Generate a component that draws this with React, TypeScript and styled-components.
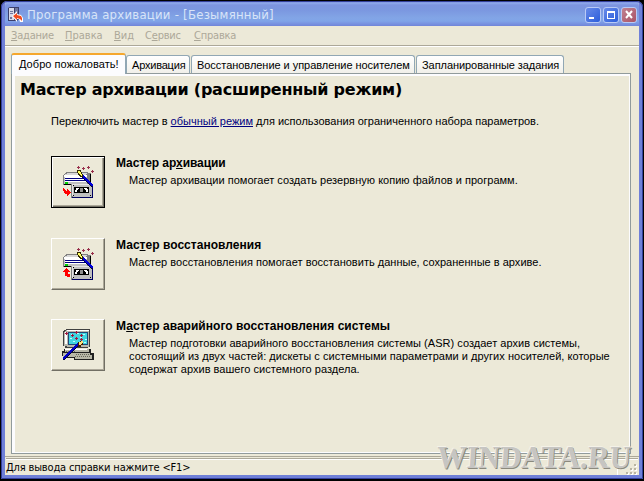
import React from "react";
import styled, { createGlobalStyle, css } from "styled-components";

const Global = createGlobalStyle`
  * { box-sizing: border-box; }
  body { margin: 0; background: #000; overflow: hidden; }
`;
const ui = `"DejaVu Sans Condensed", "DejaVu Sans", sans-serif`;
const sans = `"Liberation Sans", Arial, sans-serif`;

const Text = styled.span<{ $ls?: number }>`
  letter-spacing: ${(p) => p.$ls ?? 0}px;
  white-space: pre;
`;
const Frame = styled.div`
  position: relative;
  width: 644px;
  height: 481px;
  padding: 1px 1px 2px 1px;
  background: #000;
`;
const Window = styled.div`
  height: 478px;
  display: flex;
  flex-direction: column;
  border: solid #6f80d8;
  border-width: 0 4px 4px 4px;
  border-radius: 6px 6px 0 0;
  background: #ece9d8;
  overflow: hidden;
  outline: 1px solid #34409c;
  outline-offset: -1px;
`;
const TitleBar = styled.header`
  height: 25px;
  flex: none;
  margin: 0 -4px;
  padding: 2px 6px 0 6px;
  display: flex;
  align-items: center;
  gap: 4px;
  color: #d8e4f8;
  font: 13px/20px ${ui};
  background: linear-gradient(#6678ce 0, #8fa9ec 2px, #7d95e0 4px, #7b97e0 9px, #82a5e6 17px, #80a4e8 20px, #7891e0 23px, #7085d8 25px);
`;
const Caption = styled.div`flex: 1; padding-top: 1px;`;
const Controls = styled.div`display: flex; gap: 2px; margin-top: 1px;`;
const Control = styled.button<{ $close?: boolean }>`
  width: 16px;
  height: 16px;
  padding: 0;
  display: block;
  border: 1px solid #b9caf5;
  border-radius: 3px;
  background: ${(p) => (p.$close ? "linear-gradient(135deg,#c18291,#a95366)" : "linear-gradient(135deg,#688be9,#2b5ddb)")};
  svg { display: block; }
`;
const MenuBar = styled.nav`
  height: 20px;
  flex: none;
  display: flex;
  padding: 0 6px;
  color: #aca899;
  font: 11px/19px ${ui};
  border-bottom: 1px solid #aca899;
  box-shadow: 0 1px #fff;
`;
const MenuItem = styled.span<{ $w: number }>`width: ${(p) => p.$w}px;`;
const Tabs = styled.div`
  height: 27px;
  flex: none;
  display: flex;
  align-items: flex-end;
  padding-left: 6px;
`;
const Tab = styled.button<{ $w: number; $on?: boolean }>`
  position: relative;
  width: ${(p) => p.$w}px;
  height: 18px;
  padding: 0 0 0 5px;
  margin-right: 1px;
  text-align: left;
  border: 1px solid #91a7b4;
  border-bottom: 0;
  border-radius: 3px 3px 0 0;
  color: #000;
  background: linear-gradient(#fff, #f1f0ea);
  font: 11px/18px ${sans};
  ${(p) => p.$on && css`
    height: 21px;
    margin: 0 0 -1px;
    padding-left: 7px;
    z-index: 1;
    border-top: 2px solid #f5a72d;
    background: #fcfcfe;
    line-height: 16px;
    padding-bottom: 2px;
  `}
`;
const Panel = styled.main`
  width: 620px;
  height: 381px;
  flex: none;
  margin-left: 6px;
  border: 1px solid #919b9c;
`;
const Inner = styled.div`
  height: 379px;
  border: solid #fcfcfe;
  border-width: 2px 1px 1px 3px;
  background: #ece9d8;
  padding: 2px 0 0 5px;
`;
const Heading = styled.h1`
  margin: 0;
  height: 28px;
  font: bold 16px/24px "DejaVu Sans", sans-serif;
`;
const Intro = styled.p`
  margin: 0 0 0 31px;
  height: 50px;
  font: 11px/30px ${sans};
  a { color: #000080; text-decoration: underline; }
`;
const Row = styled.section`
  display: flex;
  height: 81.6px;
  margin-left: 31px;
  font: 11px/13px ${sans};
`;
const WizardButton = styled.button<{ $focus?: boolean }>`
  width: 54px;
  height: 52px;
  flex: none;
  padding: 0;
  display: grid;
  place-items: center;
  background: #ece9d8;
  border: 1px solid;
  border-color: ${(p) => (p.$focus ? "#000" : "#fff #716f64 #716f64 #fff")};
  box-shadow: ${(p) => (p.$focus ? "inset 1px 1px #fff, inset -1px -1px #716f64, inset -2px -2px #aca899" : "inset -1px -1px #aca899")};
`;
const Copy = styled.div`
  padding: 1px 0 0 11px;
  h2 { margin: 0 0 4px; font: bold 12px/13px ${sans}; }
  p { margin: 0 0 0 13px; }
  p > span { display: block; }
`;
const Status = styled.footer`
  flex: 1;
  margin-top: 2px;
  border-top: 1px solid #aca899;
  padding: 1px 1px 0;
  background: #ece9d8;
  font: 11px/18px ${ui};
`;
const StatusRow = styled.div`
  display: flex;
  align-items: flex-end;
  border-top: 1px solid #aca899;
  box-shadow: inset 0 1px #fff;
  > span { flex: 1; }
`;
const Divider = styled.i`
  width: 1px;
  height: 13px;
  margin-right: 8px;
  background: #fff;
`;
const Watermark = styled.div`
  position: absolute;
  left: 437px;
  top: 440px;
  font: bold 32px/34px "Liberation Serif", serif;
  transform: scaleX(0.935) skewX(-4deg);
  transform-origin: 0 50%;
  color: #c6c5c2;
  text-shadow: -1px -1px #f4f2e8, 1px 1px #8b897d;
  white-space: nowrap;
`;

const Stars = () => (
  <path fill="#98304c" d="M15 1h1v-1h1v1h1v1h-1v1h-1v-1h-1zM20 2h1v-1h1v1h1v1h-1v1h-1v-1h-1zM25 1h1v-1h1v1h1v1h-1v1h-1v-1h-1zM29 5h1v-1h1v1h1v1h-1v1h-1v-1h-1z" />
);
const TapeIcon = ({ restore = false }: { restore?: boolean }) => (
  <svg width="32" height="32" shapeRendering="crispEdges">
    <path fill="#808080" d="M4 6h22v1h3v10h-2v2H1V9h1V8h1V7h1z" />
    <path fill="#d8d8d8" d="M5 7h20v1h-1v1H3V8h2z" />
    <path fill="#fff" d="M2 9h23v2H2z" />
    <path fill="#c0c0c0" d="M2 11h23v7H2z" />
    <path fill="#fff" d="M3 11h21v5H3z" />
    <path fill="#000080" d="M3 12h20v1H3zM3 14h20v1H3z" />
    <path fill="#00d000" d="M3 16h3v2H3z" />
    <path fill="#000" d="M2 18h8v1H2zM28 8h1v9h-1z" />
    <path fill="#808080" d="M9 18h22v14H9z" />
    <path fill="#e4e4e4" d="M10 18h20v12H10z" />
    <path fill="#c0c0c0" d="M11 19h19v12H11z" />
    <path fill="#000060" d="M10 31h21v1H10zM30 20h1v12h-1z" />
    <path fill="#000" d="M12 21h15v6H12zM11 19h1v1h-1zM28 19h1v1h-1zM11 29h1v1h-1zM28 29h1v1h-1z" />
    <path fill="#fff" d="M14 22h3v1h-1v1h-1v2h-2v-2h1zM22 22h3v1h1v3h-2v-2h-1v-1h-1z" />
    <path fill="#909090" d="M18 22h3v4h-3z" />
    <path fill="#f00" d={restore ? "M4 20h1v1h1v1h1v1h1v1H6v2h2v3H5v-1H3v-4H1v-1h1v-1h1v-1h1z" : "M1 22h1v1h1v1h1v1h1v-2h1v1h1v1h1v1h1v1H8v1H7v1H6v1H5v-2H3v-1H2v-2H1z"} />
    <path stroke="#000040" strokeWidth="2.4" d="m18 8 13 13" />
    <path stroke="#0000d8" strokeWidth="1.5" d="m20 9 11 11" />
    <path fill="#302800" d="M15 4h4v2h1v2h1v3h-3v-1h-1V9h-1V7h-1z" />
    <path fill="#ff6" d="M16 5h2v1h1v2h1v2h-1V9h-1V8h-1V7h-1z" />
    <Stars />
  </svg>
);
const ComputerIcon = () => (
  <svg width="32" height="32" shapeRendering="crispEdges">
    <path fill="#404040" d="M2 1h2V0h24v18h-2v1H3v-2H1V2h1z" />
    <path fill="#b8b8ac" d="M4 1h23v17H5v-1H2V3h1V2h1z" />
    <path fill="#fff" d="M5 1h22v1H5zM3 3h2v12H3z" />
    <path fill="#204878" d="M6 3h20v13H6z" />
    <path fill="#40d4e0" d="M7 4h18v11H7z" />
    <path fill="#b8ffff" d="M9 5h2v1H9zM15 4h2v1h-2zM21 5h2v1h-2zM18 8h2v1h-2zM8 9h2v1H8zM11 12h2v1h-2zM23 10h2v1h-2zM15 14h2v1h-2zM22 13h2v1h-2z" />
    <path fill="#202020" d="M2 20h27v4h3v7H12v-2H1v-2H0v-5h2z" />
    <path fill="#b8b8a8" d="M3 20h24v3H3zM1 24h14v4H1zM14 24h14v2h2v4H13v-3h1z" />
    <path fill="#fff" d="M3 20h22v1H3z" />
    <path stroke="#666658" strokeDasharray="1 1" d="M14 25.5h14M13 27.5h16M4 22.5h10" />
    <path stroke="#000040" strokeWidth="2.4" d="M1 31 17 15" />
    <path stroke="#0000c8" strokeWidth="1.5" d="M1 30 17 14" />
    <path fill="#402000" d="M16 13h2v-1h3v4h-2v2h-3z" />
    <path fill="#ffe080" d="M17 13h2v-1h2v2h-1v1h-1v1h-2z" />
    <path fill="#a01840" d="M3 4h1V3h1v1h1v1H5v1H4V5H3zM9 6h1V5h1v1h1v1h-1v1h-1V7H9zM13 3h1V2h1v1h1v1h-1v1h-1V4h-1zM13 9h1V8h1v1h1v1h-1v1h-1v-1h-1zM18 6h1V5h1v1h1v1h-1v1h-1V7h-1zM18 10h1V9h1v1h1v1h-1v1h-1v-1h-1z" />
  </svg>
);
const AppIcon = () => (
  <svg width="16" height="16">
    <path fill="#3b3f6c" d="M1 1 3 0h9v12l-2 2H1z" />
    <path fill="#d8dae8" d="M2 1h5v12H2z" />
    <path fill="#7078a0" d="M8 1h3v8H8zM3 4h3v1H3zM3 6h3v1H3zM3 10h2v2H3z" />
    <path fill="#fff" d="m5 9 5-5v3l4 1 2 3v4h-3l-1-3h-2v3z" />
    <path fill="#f04b20" d="m6 9 4-3v2l4 1 1 2v3l-2-2-3-1v2z" />
  </svg>
);

/* The underscores in `t` enclose the access key. */
const U = ({ t, ls }: { t: string; ls?: number }) => {
  const [a, b, c] = t.split("_");
  return <Text $ls={ls}>{a}<u>{b}</u>{c}</Text>;
};

export default function App() {
  return (
    <Frame>
      <Global />
      <Window>
        <TitleBar>
          <AppIcon />
          <Caption><Text $ls={0.25}>Программа архивации - [Безымянный]</Text></Caption>
          <Controls>
            <Control aria-label="Свернуть"><svg width="14" height="14"><path fill="#fff" d="M3 9h5v2H3z" /></svg></Control>
            <Control aria-label="Развернуть"><svg width="14" height="14"><path fill="#fff" fillRule="evenodd" d="M3 3h8v8H3zm1 2v5h6V5z" /></svg></Control>
            <Control $close aria-label="Закрыть"><svg width="14" height="14"><path stroke="#fff" strokeWidth="2" d="m4 3 6 7m0-7-6 7" /></svg></Control>
          </Controls>
        </TitleBar>
        <MenuBar>
          <MenuItem $w={54}><U t="_З_адание" ls={-0.2} /></MenuItem>
          <MenuItem $w={49}><U t="_П_равка" /></MenuItem>
          <MenuItem $w={31}><U t="_В_ид" /></MenuItem>
          <MenuItem $w={49}><U t="С_е_рвис" ls={-0.2} /></MenuItem>
          <MenuItem $w={60}><U t="_С_правка" ls={-0.2} /></MenuItem>
        </MenuBar>
        <Tabs>
          <Tab $w={115} $on><Text $ls={0.05}>Добро пожаловать!</Text></Tab>
          <Tab $w={64}><Text $ls={-0.2}>Архивация</Text></Tab>
          <Tab $w={224}><Text $ls={-0.04}>Восстановление и управление носителем</Text></Tab>
          <Tab $w={148}><Text $ls={-0.06}>Запланированные задания</Text></Tab>
        </Tabs>
        <Panel>
          <Inner>
            <Heading><Text $ls={-0.24}>Мастер архивации (расширенный режим)</Text></Heading>
            <Intro><Text>Переключить мастер в <a>обычный режим</a> для использования ограниченного набора параметров.</Text></Intro>
            <Row>
              <WizardButton $focus><TapeIcon /></WizardButton>
              <Copy><h2><U ls={-0.06} t="Мастер ар_х_ивации" /></h2><p><Text $ls={0.02}>Мастер архивации помогает создать резервную копию файлов и программ.</Text></p></Copy>
            </Row>
            <Row>
              <WizardButton><TapeIcon restore /></WizardButton>
              <Copy><h2><U ls={0.03} t="Мас_т_ер восстановления" /></h2><p><Text $ls={0.02}>Мастер восстановления помогает восстановить данные, сохраненные в архиве.</Text></p></Copy>
            </Row>
            <Row>
              <WizardButton><ComputerIcon /></WizardButton>
              <Copy>
                <h2><U ls={0.03} t="М_а_стер аварийного восстановления системы" /></h2>
                <p>
                  <Text $ls={0.03}>Мастер подготовки аварийного восстановления системы (ASR) создает архив системы,</Text>
                  <Text $ls={0.03}>состоящий из двух частей: дискеты с системными параметрами и других носителей, которые</Text>
                  <Text $ls={0.03}>содержат архив вашего системного раздела.</Text>
                </p>
              </Copy>
            </Row>
          </Inner>
        </Panel>
        <Status>
          <StatusRow>
            <Text $ls={-0.16}>Для вывода справки нажмите &lt;F1&gt;</Text>
            <Divider />
            <svg width="12" height="13" shapeRendering="crispEdges">
              <path fill="#fff" d="M9 1h2v2H9zM5 5h2v2H5zM9 5h2v2H9zM1 9h2v2H1zM5 9h2v2H5zM9 9h2v2H9z" />
              <path fill="#b8b4a2" d="M8 0h2v2H8zM4 4h2v2H4zM8 4h2v2H8zM0 8h2v2H0zM4 8h2v2H4zM8 8h2v2H8z" />
            </svg>
          </StatusRow>
        </Status>
      </Window>
      <Watermark>WINDATA.RU</Watermark>
    </Frame>
  );
}
